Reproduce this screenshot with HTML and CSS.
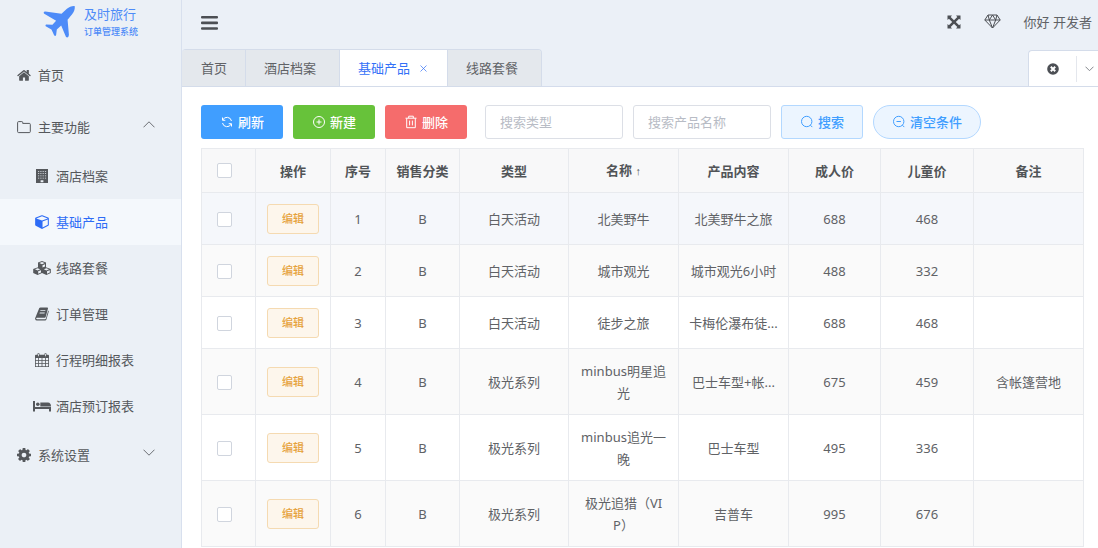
FILE: index.html
```html
<!DOCTYPE html>
<html lang="zh-CN">
<head>
<meta charset="utf-8">
<meta name="viewport" content="width=device-width, initial-scale=1">
<title>及时旅行 订单管理系统</title>
<link rel="stylesheet" href="styles.css">
</head>
<body>
<div class="app">
  <aside class="sidebar">
    <div class="brand">
      <svg class="brand-logo" viewBox="9 9 98 98"><path d="M103 12C96 11 86 15 80 20L64 35L16 28Q11 28 11 31Q11 34 14 36L48 56L37 68L18 67Q15 69 17 72L34 82Q38 90 42 99Q46 103 48 98L50 82L63 70L77 103Q80 107 84 104L86 98L82 53L96 36C101 29 105 20 103 12Z"/></svg>
      <div class="brand-text">
        <span class="brand-name">及时旅行</span>
        <span class="brand-sub">订单管理系统</span>
      </div>
    </div>
    <nav class="menu">
      <a class="item" href="#"><svg class="icon" viewBox="64 100 1664 1500"><path d="M1472 992v480q0 26-19 45t-45 19h-384v-384h-256v384h-384q-26 0-45-19t-19-45v-480q0-1 .5-3t.5-3l575-474 575 474q1 2 1 6zm223-69l-62 74q-8 9-21 11h-3q-13 0-21-7l-692-577-692 577q-12 8-24 7-13-2-21-11l-62-74q-8-10-7-23.5t11-21.5l719-599q32-26 76-26t76 26l244 204v-195q0-14 9-23t23-9h192q14 0 23 9t9 23v408l219 182q10 8 11 21.5t-7 23.5z"/></svg><span>首页</span></a>
      <a class="item" href="#"><svg class="icon line" viewBox="0 0 14 14"><path d="M.6 11.6V2.6q0-1 1-1h3.200q.9 0 .9.900v.9h6.600q1 0 1 1v7.200q0 1-1 1H1.600q-1 0-1-1z"/></svg><span>主要功能</span><svg class="chevron" viewBox="0 0 12 7"><path d="M.5 6.300L6 .8l5.500 5.500"/></svg></a>
      <a class="item sub" href="#"><svg class="icon" viewBox="0 0 14 14"><path fill-rule="evenodd" d="M1 0h12v14H1zM3 1.900v.8h1.200v-.8zm2.300 0v.8h1.200v-.8zm2.300 0v.8h1.200v-.8zm2.300 0v.8h1.200v-.8zM3 4.200v.8h1.200v-.8zm2.300 0v.8h1.200v-.8zm2.300 0v.8h1.200v-.8zm2.300 0v.8h1.200v-.8zM3 6.500v.8h1.200v-.8zm2.300 0v.8h1.200v-.8zm2.300 0v.8h1.200v-.8zm2.300 0v.8h1.200v-.8zM3 8.800v.8h1.200v-.8zm2.300 0v.8h1.200v-.8zm2.300 0v.8h1.200v-.8zm2.300 0v.8h1.200v-.8zM5.600 11.200V13.200h2.800v-2z"/></svg><span>酒店档案</span></a>
      <a class="item sub active" href="#"><svg class="icon" viewBox="0 100 1664 1700"><path d="M896 1629l640-349v-636l-640 233v752zm-64-865l698-254-698-254-698 254zm832-252v768q0 35-18 65t-49 47l-704 384q-28 16-61 16t-61-16l-704-384q-31-17-49-47t-18-65v-768q0-40 23-73t61-47l704-256q22-8 44-8t44 8l704 256q38 14 61 47t23 73z"/></svg><span>基础产品</span></a>
      <a class="item sub" href="#"><svg class="icon wide" viewBox="0 0 18 14"><path fill-rule="evenodd" d="M9 0l4 1.500v4.700l4.800 1.800v4L13.400 14 9 12.100 4.600 14 .2 12V8L5 6.200V1.500zM9 1.100L6.300 2.100 9 3.200l2.700-1.100zM9.500 4.200v2.400L12 5.600V3.200zM4.600 7.300L2 8.300l2.600 1.100L7.200 8.300zM5.200 10.300v2.400L8 11.500V9.200zM13.400 7.300l-2.600 1 2.600 1.100L16 8.300zM14 10.300v2.400l2.800-1.200V9.200z"/></svg><span>线路套餐</span></a>
      <a class="item sub" href="#"><svg class="icon" viewBox="0 0 14 14"><path fill-rule="evenodd" d="M4.300 1Q4.700.5 5.500.5h6.700q1 0 .8 1L10.700 10q-.2.700-1 .7H2q-.9.100-.8.800.1.700.9.700h8q.6 0 .8-.6L13.200 3.500q.7.300.5 1.200l-2.300 7.900q-.3 1-1.300 1H2q-1.500-.1-1.900-1.700-.1-.7.300-1.500zM5.500 3.200l-.3.900h5l.3-.9zM4.800 5.500l-.3.900h5l.3-.9z"/></svg><span>订单管理</span></a>
      <a class="item sub" href="#"><svg class="icon" viewBox="0 0 14 14"><path fill-rule="evenodd" d="M0 2.700q0-1 1-1h1.500V1q0-1 1-1t1 1v.7h5V1q0-1 1-1t1 1v.7H13q1 0 1 1V14H0zM3.100.8v2.400h.8V.8zm7 0v2.400h.8V.8zM.8 5v1.900h2.400V5zm3.200 0v1.900h2.600V5zm3.400 0v1.900H10V5zm3.400 0v1.900h2.400V5zM.8 7.700v2.200h2.400V7.700zm3.200 0v2.200h2.600V7.700zm3.400 0v2.200H10V7.700zm3.400 0v2.200h2.400V7.700zM.8 10.700v2.500h2.400v-2.500zm3.200 0v2.500h2.600v-2.500zm3.400 0v2.500H10v-2.500zm3.400 0v2.500h2.400v-2.500z"/></svg><span>行程明细报表</span></a>
      <a class="item sub" href="#"><svg class="icon wide" viewBox="0 0 18 14"><path d="M0 2h2v6h16v4.500h-2V10H2v2.500H0z"/><circle cx="4.800" cy="5.200" r="1.800"/><path d="M7.300 3.500H15q3 .3 3 4H7.300z"/></svg><span>酒店预订报表</span></a>
      <a class="item" href="#"><svg class="icon" viewBox="128 128 1536 1536"><path d="M1152 896q0-106-75-181t-181-75-181 75-75 181 75 181 181 75 181-75 75-181zm512-109v222q0 12-8 23t-20 13l-185 28q-19 54-39 91 35 50 107 138 10 12 10 25t-9 23q-27 37-99 108t-94 71q-12 0-26-9l-138-108q-44 23-91 38-16 136-29 186-7 28-36 28h-222q-14 0-24.500-8.500t-11.500-21.500l-28-184q-49-16-90-37l-141 107q-10 9-25 9-14 0-25-11-126-114-165-168-7-10-7-23 0-12 8-23 15-21 51-66.500t54-70.500q-27-50-41-99l-183-27q-13-2-21-12.500t-8-23.500v-222q0-12 8-23t19-13l186-28q14-46 39-92-40-57-107-138-10-12-10-24 0-10 9-23 26-36 98.500-107.500t94.500-71.500q13 0 26 10l138 107q44-23 91-38 16-136 29-186 7-28 36-28h222q14 0 24.500 8.500t11.500 21.500l28 184q49 16 90 37l142-107q9-9 24-9 13 0 25 10 129 119 165 170 7 8 7 22 0 12-8 23-15 21-51 66.500t-54 70.500q26 50 41 98l183 28q13 2 21 12.500t8 23.500z"/></svg><span>系统设置</span><svg class="chevron" viewBox="0 0 12 7"><path d="M.5.700L6 6.200 11.500.7"/></svg></a>
    </nav>
  </aside>

  <div class="main">
    <header class="topbar">
      <button class="icon-btn" aria-label="折叠菜单"><svg class="bars" viewBox="0 0 17 14"><path d="M1 0h15q1 0 1 1v.6q0 1-1 1H1q-1 0-1-1V1q0-1 1-1zM1 5.600h15q1 0 1 1v.6q0 1-1 1H1q-1 0-1-1v-.6q0-1 1-1zM1 11.200h15q1 0 1 1v.6q0 1-1 1H1q-1 0-1-1v-.6q0-1 1-1z"/></svg></button>
      <div class="topbar-right">
        <button class="icon-btn" aria-label="全屏"><svg class="expand" viewBox="0 0 14 14"><path d="M.5.500H5L3.700 1.900 7 5.200l3.300-3.300L9 .5h4.500V5l-1.400-1.300L8.800 7l3.300 3.300L13.500 9v4.500H9l1.300-1.400L7 8.800l-3.300 3.300L5 13.500H.5V9l1.400 1.300L5.200 7 1.900 3.700.5 5z"/></svg></button>
        <button class="icon-btn" aria-label="主题"><svg class="diamond" viewBox="0 0 17 15"><path d="M4 1h9l3.200 5L8.500 14 .8 6zM.8 6h15.400M5.300 6L8.500 14l3.200-8M4 1l1.300 5L8.500 1l3.200 5L13 1"/></svg></button>
        <span>你好 开发者</span>
      </div>
    </header>

    <div class="tabbar">
      <nav class="tabs">
        <a class="tab home" href="#">首页</a>
        <a class="tab" href="#">酒店档案</a>
        <a class="tab current" href="#">基础产品<svg class="close" viewBox="0 0 7 7"><path d="M.5.500l6 6m0-6l-6 6"/></svg></a>
        <a class="tab" href="#">线路套餐</a>
      </nav>
      <div class="tab-tools">
        <button class="icon-btn close-all" aria-label="关闭标签"><svg viewBox="0 0 12 12"><circle cx="6" cy="6" r="5.800"/><path d="M3.800 3.800l4.400 4.400m0-4.400L3.800 8.200"/></svg></button>
        <button class="icon-btn more" aria-label="更多"><svg viewBox="0 0 9 6"><path d="M.5.700l4 4 4-4"/></svg></button>
      </div>
    </div>

    <main class="content">
      <form class="toolbar">
        <button type="button" class="btn blue"><svg viewBox="0 0 14 14"><path d="M2.500 2.500v2.800h2.800M11.500 11.500V8.700H8.700M2.800 5A4.600 4.600 0 0 1 11.500 6M11.200 9A4.600 4.600 0 0 1 2.500 8"/></svg>刷新</button>
        <button type="button" class="btn green"><svg viewBox="0 0 14 14"><circle cx="7" cy="7" r="5.500"/><path d="M4.500 7h5M7 4.500v5"/></svg>新建</button>
        <button type="button" class="btn red"><svg viewBox="0 0 14 14"><path d="M1.500 3.200h11M4.700 3V1.200h4.600V3M2.700 3.300v9.400h8.600V3.300M5.600 5.600v4.800M8.400 5.600v4.800"/></svg>删除</button>
        <input class="field first" type="text" placeholder="搜索类型" aria-label="搜索类型">
        <input class="field" type="text" placeholder="搜索产品名称" aria-label="搜索产品名称">
        <button type="button" class="btn plain"><svg viewBox="0 0 14 14"><circle cx="6.700" cy="6.500" r="5.200"/><path d="M10.400 10.200l1.900 1.900"/></svg>搜索</button>
        <button type="button" class="btn plain round"><svg viewBox="0 0 14 14"><circle cx="6.700" cy="6.500" r="5.200"/><path d="M10.400 10.200l1.900 1.900M4.500 6.500h4.400"/></svg>清空条件</button>
      </form>

      <table class="grid">
        <colgroup><col class="c-check"><col class="c-op"><col class="c-no"><col class="c-sale"><col class="c-type"><col class="c-text"><col class="c-text"><col class="c-adult"><col class="c-child"><col class="c-text"></colgroup>
        <thead>
          <tr><th class="check"><input type="checkbox" aria-label="全选"></th><th>操作</th><th>序号</th><th>销售分类</th><th>类型</th><th>名称 <span class="sort">↑</span></th><th>产品内容</th><th>成人价</th><th>儿童价</th><th>备注</th></tr>
        </thead>
        <tbody>
          <tr class="hover"><td class="check"><input type="checkbox" aria-label="选择 1"></td><td><button class="edit">编辑</button></td><td>1</td><td>B</td><td>白天活动</td><td>北美野牛</td><td class="clip">北美野牛之旅</td><td>688</td><td>468</td><td></td></tr>
          <tr><td class="check"><input type="checkbox" aria-label="选择 2"></td><td><button class="edit">编辑</button></td><td>2</td><td>B</td><td>白天活动</td><td>城市观光</td><td class="clip">城市观光6小时</td><td>488</td><td>332</td><td></td></tr>
          <tr><td class="check"><input type="checkbox" aria-label="选择 3"></td><td><button class="edit">编辑</button></td><td>3</td><td>B</td><td>白天活动</td><td>徒步之旅</td><td class="clip">卡梅伦瀑布徒...</td><td>688</td><td>468</td><td></td></tr>
          <tr><td class="check"><input type="checkbox" aria-label="选择 4"></td><td><button class="edit">编辑</button></td><td>4</td><td>B</td><td>极光系列</td><td>minbus明星追光</td><td class="clip">巴士车型+帐...</td><td>675</td><td>459</td><td>含帐篷营地</td></tr>
          <tr><td class="check"><input type="checkbox" aria-label="选择 5"></td><td><button class="edit">编辑</button></td><td>5</td><td>B</td><td>极光系列</td><td>minbus追光一晚</td><td class="clip">巴士车型</td><td>495</td><td>336</td><td></td></tr>
          <tr><td class="check"><input type="checkbox" aria-label="选择 6"></td><td><button class="edit">编辑</button></td><td>6</td><td>B</td><td>极光系列</td><td>极光追猎（VIP）</td><td class="clip">吉普车</td><td>995</td><td>676</td><td></td></tr>
        </tbody>
      </table>
    </main>
  </div>
</div>
</body>
</html>
```
FILE: styles.css
```css
* { box-sizing: border-box; }

body {
  margin: 0;
  font: 13px/22px "Noto Sans", "Noto Sans CJK SC", sans-serif;
  color: #606266;
  background: #fff;
}

a { color: inherit; text-decoration: none; }
svg { display: block; flex: none; fill: currentColor; }
button, input { font: inherit; color: inherit; }
button { cursor: pointer; }

.app { display: flex; min-height: 100vh; }

/* Sidebar */
.sidebar {
  flex: none;
  width: 182px;
  background: #ebf0f6;
  border-right: 1px solid #d8e0ee;
}
.brand {
  display: flex;
  gap: 8px;
  height: 49px;
  padding: 5px 0 0 43px;
  color: #4d8bf8;
}
.brand-logo { width: 33px; height: 33px; }
.brand-text { display: flex; flex-direction: column; }
.brand-name { line-height: 18px; }
.brand-sub { font-size: 9px; line-height: 18px; font-weight: 500; }

.item {
  display: flex;
  align-items: center;
  gap: 7px;
  height: 52px;
  padding: 0 26px 0 17px;
  color: #55585c;
}
.item .icon { width: 14px; height: 14px; }
.item .wide { width: 18px; margin: 0 -2px; }
.sub { height: 46px; padding-left: 35px; }
.active { background: #f4f8fc; color: #2d6cf6; }
.line { fill: none; stroke: currentColor; }
.chevron {
  width: 12px;
  height: 7px;
  margin: 0 0 5px auto;
  fill: none;
  stroke: #6c6f74;
}

/* Top bar */
.main {
  flex: 1;
  min-width: 0;
  display: flex;
  flex-direction: column;
}
.topbar {
  display: flex;
  justify-content: space-between;
  align-items: center;
  height: 49px;
  padding: 0 6px 6px 19px;
  background: #ebf0f7;
}
.icon-btn {
  padding: 0;
  border: 0;
  background: none;
  color: #4c4f54;
}
.bars { width: 17px; height: 14px; margin-top: 3px; }
.topbar-right { display: flex; align-items: center; gap: 23px; }
.expand { width: 14px; height: 14px; }
.diamond {
  width: 17px;
  height: 15px;
  fill: none;
  stroke: currentColor;
}

/* Page tabs */
.tabbar {
  display: flex;
  justify-content: space-between;
  height: 38px;
  background: #ebf0f7;
  box-shadow: inset 0 -1px #d4dcec;
}
.tabs {
  display: flex;
  border: 1px solid #d4dcea;
  border-left: 0;
  border-radius: 4px 4px 0 0;
  overflow: hidden;
}
.tab {
  display: flex;
  align-items: center;
  gap: 10px;
  padding: 0 23px 0 18px;
  background: #e4e8ed;
  border-left: 1px solid #d4dcea;
}
.home { padding: 0 18px 0 19px; border-left: 0; }
.current {
  margin-bottom: -1px;
  padding: 0 20px 1px 18px;
  background: #fff;
  color: #3370f7;
}
.close {
  width: 7px;
  height: 7px;
  fill: none;
  stroke: currentColor;
  stroke-opacity: .7;
}
.tab-tools {
  display: flex;
  align-items: center;
  margin-top: 1px;
  background: #fff;
  border: 1px solid #d4dcea;
  border-right: 0;
  border-radius: 4px 0 0 0;
}
.close-all { padding: 7px 17px 7px 18px; border-right: 1px solid #e4e7ed; }
.close-all svg { width: 12px; height: 12px; }
.close-all path { stroke: #fff; stroke-width: 2; }
.more { padding: 7px 4px 7px 8px; }
.more svg {
  width: 9px;
  height: 6px;
  fill: none;
  stroke: #85888e;
}

/* Content */
.content {
  flex: 1;
  padding: 18px 14px 0 19px;
  background: #fff;
}
.toolbar {
  display: flex;
  gap: 10px;
  margin-bottom: 9px;
}
.btn {
  display: flex;
  align-items: center;
  justify-content: center;
  gap: 4px;
  height: 34px;
  padding: 0 18px;
  border: 1px solid transparent;
  border-radius: 3px;
  font-weight: 500;
  color: #fff;
}
.btn svg {
  width: 14px;
  height: 14px;
  fill: none;
  stroke: currentColor;
}
.blue { background: #409eff; }
.green { background: #67c23a; }
.red { background: #f56c6c; }
.plain { background: #ecf5ff; border-color: #b3d8ff; color: #409eff; }
.round { border-radius: 17px; }
.field {
  width: 138px;
  height: 34px;
  padding: 0 14px;
  border: 1px solid #dcdfe6;
  border-radius: 3px;
  background: #fff;
}
.first { margin-left: 8px; }
.field::placeholder { color: #b8bcc5; opacity: 1; }

/* Data table */
.grid {
  width: 100%;
  table-layout: fixed;
  border-collapse: separate;
  border-spacing: 0;
  border: solid #e8eaee;
  border-width: 1px 0 0 1px;
}
.c-check { width: 54px; }
.c-op { width: 75px; }
.c-no { width: 55px; }
.c-sale { width: 74px; }
.c-type { width: 109px; }
.c-text { width: 110px; }
.c-adult { width: 92px; }
.c-child { width: 93px; }
.grid th, .grid td {
  padding: 11px 9px 10px;
  border: solid #e8eaee;
  border-width: 0 1px 1px 0;
  text-align: center;
  word-break: break-all;
}
.grid th {
  padding: 10px 9px;
  background: #f8f8f9;
  color: #515457;
  font-weight: 700;
}
.sort { font-family: "Liberation Sans", sans-serif; font-size: 11px; }
.grid tr:nth-child(even) td { background: #fafafa; }
.grid .hover td { background: #f5f7fb; }
.grid .clip {
  overflow: hidden;
  white-space: nowrap;
  text-overflow: ellipsis;
}
.grid .check { padding-left: 15px; text-align: left; }
.check input {
  appearance: none;
  display: block;
  width: 15px;
  height: 15px;
  margin: 0;
  border: 1px solid #d0d5de;
  border-radius: 2px;
  background: #fff;
}
.check input:checked { background: #409eff; border-color: #409eff; }
.edit {
  display: block;
  height: 30px;
  margin: 0 auto;
  padding: 0 14px;
  border: 1px solid #f5dab1;
  border-radius: 3px;
  background: #fdf6ec;
  color: #e6a23c;
  font-size: 11px;
  font-weight: 500;
}
```
